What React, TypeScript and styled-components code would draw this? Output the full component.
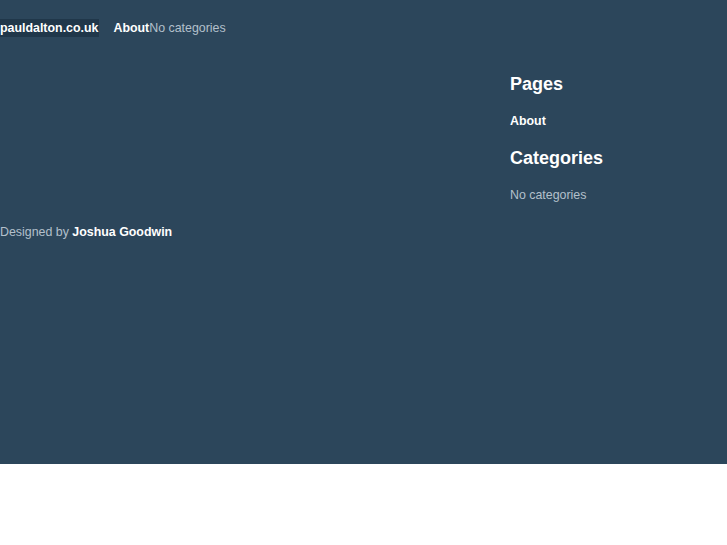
import React from 'react'
import styled, { createGlobalStyle } from 'styled-components'

const GlobalStyle = createGlobalStyle`
    html, body {
        margin: 0;
        padding: 0;
        background: #ffffff;
    }
    body {
        font-family: "Liberation Sans", Arial, sans-serif;
    }
`

const Page = styled.div`
    background-color: #2c465b;
    color: #b3c0cb;
    height: 464px;
    padding-top: 19px;
    box-sizing: border-box;
    font-size: 12.4px;
`

const Header = styled.header`
    display: flex;
    align-items: center;
    line-height: 18px;
`

const SiteTitle = styled.a`
    background-color: #20374a;
    color: #ffffff;
    font-weight: bold;
    padding: 0 1px 0 0;
    margin-right: 14px;
    text-decoration: none;
`

const NavLink = styled.a`
    color: #ffffff;
    font-weight: bold;
    text-decoration: none;
`

const Body = styled.div`
    display: grid;
    grid-template-columns: 510px 1fr;
    margin-top: 36px;
`

const Main = styled.main``

const Sidebar = styled.aside``

const WidgetTitle = styled.h2`
    color: #ffffff;
    font-size: 18px;
    font-weight: bold;
    line-height: 22px;
    margin: 0 0 17px;
`

const WidgetList = styled.ul`
    list-style: none;
    margin: 0 0 17px;
    padding: 0;
    line-height: 18px;
`

const WidgetItem = styled.li<{ $link?: boolean }>`
    color: ${p => (p.$link ? '#ffffff' : '#b3c0cb')};
    font-weight: ${p => (p.$link ? 'bold' : 'normal')};
`

const Footer = styled.footer`
    margin-top: 2px;
    line-height: 18px;

    strong {
        color: #ffffff;
    }
`

const App: React.FC<{}> = () => {
    return (
        <>
            <GlobalStyle />
            <Page>
                <Header>
                    <SiteTitle>pauldalton.co.uk</SiteTitle>
                    <NavLink>About</NavLink>
                    <span>No categories</span>
                </Header>
                <Body>
                    <Main />
                    <Sidebar>
                        <WidgetTitle>Pages</WidgetTitle>
                        <WidgetList>
                            <WidgetItem $link>About</WidgetItem>
                        </WidgetList>
                        <WidgetTitle>Categories</WidgetTitle>
                        <WidgetList>
                            <WidgetItem>No categories</WidgetItem>
                        </WidgetList>
                    </Sidebar>
                </Body>
                <Footer>
                    Designed by <strong>Joshua Goodwin</strong>
                </Footer>
            </Page>
        </>
    )
}

export default App
